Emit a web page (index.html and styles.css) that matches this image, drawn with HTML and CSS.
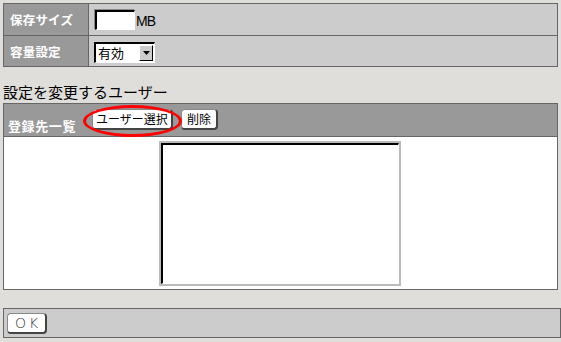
FILE: index.html
```html
<!DOCTYPE html>
<html lang="ja">
<head>
<meta charset="utf-8">
<title>設定</title>
<link rel="stylesheet" href="styles.css">
</head>
<body>
<div class="panel settings">
  <div class="label">保存サイズ</div>
  <div class="value"><span class="textbox"></span><span class="unit">MB</span></div>
  <div class="label last">容量設定</div>
  <div class="value last"><span class="select"><span class="sel-text">有効</span><span class="sel-btn"><svg width="7" height="4" viewBox="0 0 7 4"><path d="M0 0h7L3.5 4z" fill="#000"/></svg></span></span></div>
</div>
<h2 class="heading">設定を変更するユーザー</h2>
<div class="panel users">
  <div class="users-head">
    <span class="users-title">登録先一覧</span>
    <span class="btn-wrap"><button class="btn btn-select">ユーザー選択</button><span class="ring"></span></span>
    <button class="btn btn-delete">削除</button>
  </div>
  <div class="users-body">
    <div class="listbox"></div>
  </div>
</div>
<div class="panel footer">
  <button class="btn ok">OK</button>
</div>
</body>
</html>
```
FILE: styles.css
```css
html, body {
  margin: 0;
  background: #dfdedb;
}
body {
  padding: 3px;
  font-family: "Noto Sans CJK JP", "DejaVu Sans", sans-serif;
  font-size: 12px;
  color: #000;
}
.panel {
  border: 1px solid #666;
  width: 553px;
}
.settings {
  display: grid;
  grid-template-columns: 85px 1fr;
  grid-template-rows: 32px 30px;
}
.label {
  background: #999;
  color: #fff;
  font-weight: bold;
  font-size: 12.5px;
  border-right: 1px solid #666;
  border-bottom: 1px solid #666;
  display: flex;
  align-items: center;
  padding-left: 6px;
  letter-spacing: 0.2px;
}
.value {
  background: #ccc;
  border-bottom: 1px solid #666;
  display: flex;
  align-items: center;
  padding-left: 5px;
}
.label.last, .value.last { border-bottom: none; }
.textbox {
  display: inline-block;
  box-sizing: border-box;
  width: 40px;
  height: 20px;
  margin: 1px 0 0 1px;
  background: #fff;
  border-top: 2px solid #000;
  border-left: 2px solid #000;
  border-right: 1px solid #fff;
  border-bottom: 1px solid #fff;
  box-shadow: -1px -1px 0 #888;
}
.unit {
  font-family: "Liberation Sans", sans-serif;
  font-size: 14px;
  margin-left: 1px;
  margin-top: 2px;
  letter-spacing: -0.8px;
}
.select {
  display: inline-flex;
  align-items: center;
  box-sizing: border-box;
  width: 61px;
  height: 21px;
  background: #fff;
  border-top: 2px solid #000;
  border-left: 2px solid #000;
  border-right: 1px solid #fff;
  border-bottom: 1px solid #fff;
  margin-top: 2px;
}
.sel-text {
  flex: 1;
  padding-left: 2px;
  font-size: 13px;
  line-height: 17px;
}
.sel-btn {
  width: 14px;
  height: 16px;
  background: #ccc;
  border-top: 1px solid #fff;
  border-left: 1px solid #fff;
  border-right: 1px solid #000;
  border-bottom: 1px solid #000;
  box-sizing: border-box;
  display: flex;
  align-items: center;
  justify-content: center;
  margin-right: 1px;
}
.heading {
  margin: 0;
  font-weight: normal;
  font-size: 15px;
  line-height: 20px;
  padding-top: 15px;
  padding-bottom: 1px;
}
.users-head {
  background: #999;
  height: 32px;
  border-bottom: 1px solid #666;
  display: flex;
  align-items: flex-start;
  padding-left: 4px;
}
.users-title {
  color: #fff;
  font-weight: bold;
  font-size: 13px;
  line-height: 18px;
  letter-spacing: 0.6px;
  margin-top: 13px;
  width: 84px;
  flex: none;
}
.btn-wrap {
  position: relative;
  margin-top: 5px;
  margin-right: 8px;
  display: inline-flex;
}
.btn {
  font-family: "Noto Sans CJK JP", "DejaVu Sans", sans-serif;
  font-size: 12px;
  line-height: 16px;
  height: 21px;
  box-sizing: border-box;
  padding: 0 3px;
  background: #fff;
  border: 1px solid #888;
  border-right: 2px solid #444;
  border-bottom: 2px solid #444;
  border-radius: 4px;
  color: #000;
  margin: 5px 0 0 0;
}
.btn-wrap .btn { margin-top: 0; }
.btn-select { width: 81px; }
.btn-delete { width: 37px; padding: 0; }
.ring {
  position: absolute;
  box-sizing: border-box;
  left: -9px;
  top: -4px;
  width: 99px;
  height: 32px;
  border: 3px solid #f00;
  border-radius: 50%;
  pointer-events: none;
}
.users-body {
  background: #fff;
  height: 152px;
  padding-top: 4px;
  box-sizing: border-box;
  padding-left: 155px;
}
.listbox {
  box-sizing: border-box;
  width: 238px;
  height: 141px;
  background: #fff;
  border-top: 2px solid #000;
  border-left: 2px solid #000;
  border-right: 1px solid #fff;
  border-bottom: 1px solid #fff;
  outline: 2px solid #bbb;
  outline-offset: 0;
  margin-top: 2px;
  margin-left: 2px;
}
.footer {
  margin-top: 18px;
  background: #ccc;
  height: 28px;
  display: flex;
  align-items: center;
  padding-left: 3px;
  box-sizing: content-box;
}
.ok {
  margin-top: 0;
  width: 40px;
  padding: 0;
  font-family: "DejaVu Sans", sans-serif;
  font-size: 14px;
  letter-spacing: 3px;
  text-indent: 3px;
  font-weight: 200;
  color: #333;
}
```
